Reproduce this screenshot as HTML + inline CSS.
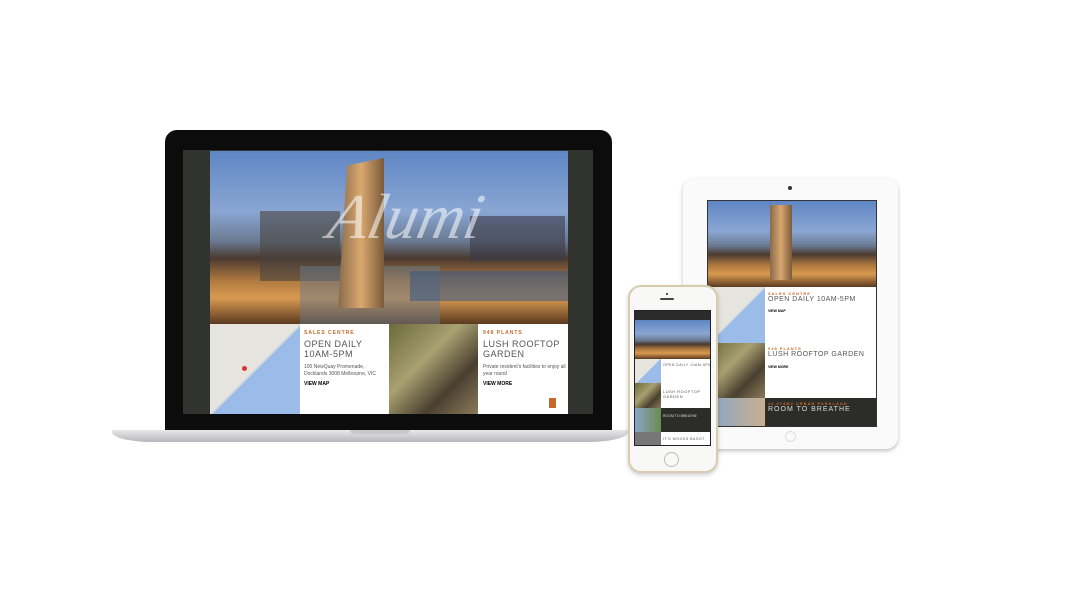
<!DOCTYPE html>
<html><head><meta charset="utf-8"><style>
*{margin:0;padding:0;box-sizing:border-box}
body{width:1065px;height:600px;background:#fff;position:relative;overflow:hidden;font-family:"Liberation Sans",sans-serif}
.a{position:absolute;white-space:nowrap}
.photo{background:linear-gradient(180deg,#5f86c4 0%,#8aa6d3 35%,#6a7a92 52%,#4a3a30 62%,#b07a40 75%,#d89a50 85%,#5b3a20 100%)}
.tower{background:linear-gradient(90deg,#8a6a4a,#d9a870,#7a5a3a)}
.map{background:linear-gradient(135deg,#e6e4de 0%,#e6e4de 50%,#9bbbe8 52%,#9bbbe8 100%)}
.plant{background:linear-gradient(135deg,#6b6a3a,#a8a070 40%,#4a4030 70%,#8a7a5a)}
.or{color:#c8692a;font-weight:bold;letter-spacing:1px}
.ttl{color:#555;letter-spacing:.5px}
</style></head><body>
<!-- laptop -->
<div class="a" style="left:165px;top:130px;width:447px;height:302px;background:#0c0c0c;border-radius:12px 12px 0 0"></div>
<div class="a" style="left:183px;top:150px;width:410px;height:264px;background:#30332e"></div>
<div class="a photo" style="left:210px;top:151px;width:358px;height:173px;overflow:hidden">
<div class="a" style="left:50px;top:60px;width:80px;height:70px;background:#4a4440;opacity:.6"></div>
<div class="a" style="left:260px;top:65px;width:95px;height:45px;background:#3a3a48;opacity:.6"></div>
<div class="a" style="left:90px;top:115px;width:140px;height:58px;background:#6a7a8a;opacity:.5"></div>
<div class="a" style="left:200px;top:120px;width:158px;height:30px;background:#3c5a84;opacity:.6"></div>
</div>
<div class="a tower" style="left:338px;top:158px;width:46px;height:150px;clip-path:polygon(20% 5%,100% 0,100% 100%,0 100%)"></div>
<div class="a" style="left:330px;top:180px;color:#fff;font-family:'Liberation Serif',serif;font-style:italic;font-size:64px;opacity:.55;transform:skewX(-12deg)">Alumi</div>
<div class="a" style="left:210px;top:324px;width:358px;height:90px;background:#fff"></div>
<div class="a map" style="left:210px;top:324px;width:90px;height:90px"></div>
<div class="a" style="left:242px;top:366px;width:5px;height:5px;border-radius:50%;background:#d33"></div>
<div class="a" style="left:304px;top:330px;font-size:5px"><span class="or">SALES CENTRE</span></div>
<div class="a ttl" style="left:304px;top:339px;font-size:9px;line-height:10px">OPEN DAILY<br>10AM-5PM</div>
<div class="a" style="left:304px;top:364px;font-size:5px;color:#555;line-height:7px">100 NewQuay Promenade,<br>Docklands 3008 Melbourne, VIC</div>
<div class="a" style="left:304px;top:381px;font-size:5px;font-weight:bold">VIEW MAP</div>
<div class="a plant" style="left:389px;top:324px;width:89px;height:90px"></div>
<div class="a" style="left:483px;top:330px;font-size:5px"><span class="or">948 PLANTS</span></div>
<div class="a ttl" style="left:483px;top:339px;font-size:9px;line-height:10px">LUSH ROOFTOP<br>GARDEN</div>
<div class="a" style="left:483px;top:364px;font-size:5px;color:#555;line-height:7px">Private resident's facilities to enjoy all<br>year round</div>
<div class="a" style="left:483px;top:381px;font-size:5px;font-weight:bold">VIEW MORE</div>
<div class="a" style="left:549px;top:398px;width:7px;height:10px;background:#c8692a"></div>
<div class="a" style="left:112px;top:430px;width:516px;height:12px;background:linear-gradient(180deg,#e8e8ea,#b8b8bc);border-radius:0 0 40px 40px/0 0 10px 10px"></div>
<div class="a" style="left:350px;top:430px;width:60px;height:4px;background:#c8c8cc;border-radius:0 0 4px 4px"></div>
<!-- ipad -->
<div class="a" style="left:683px;top:178px;width:215px;height:271px;background:#fafafa;border-radius:12px;box-shadow:0 2px 4px rgba(0,0,0,.25)"></div>
<div class="a" style="left:788px;top:186px;width:4px;height:4px;border-radius:50%;background:#333"></div>
<div class="a" style="left:785px;top:431px;width:11px;height:11px;border-radius:50%;border:1px solid #ddd"></div>
<div class="a" style="left:707px;top:200px;width:170px;height:227px;background:#fff;border:1px solid #333"></div>
<div class="a photo" style="left:708px;top:201px;width:168px;height:86px"></div>
<div class="a tower" style="left:770px;top:205px;width:22px;height:75px"></div>
<div class="a map" style="left:708px;top:287px;width:57px;height:56px"></div>
<div class="a" style="left:768px;top:291px;font-size:4px"><span class="or">SALES CENTRE</span></div>
<div class="a ttl" style="left:768px;top:296px;font-size:7px">OPEN DAILY 10AM-5PM</div>
<div class="a" style="left:768px;top:309px;font-size:3.5px;font-weight:bold">VIEW MAP</div>
<div class="a plant" style="left:708px;top:343px;width:57px;height:55px"></div>
<div class="a" style="left:768px;top:346px;font-size:4px"><span class="or">948 PLANTS</span></div>
<div class="a ttl" style="left:768px;top:351px;font-size:7px">LUSH ROOFTOP GARDEN</div>
<div class="a" style="left:768px;top:365px;font-size:3.5px;font-weight:bold">VIEW MORE</div>
<div class="a" style="left:708px;top:398px;width:168px;height:28px;background:#2c2d29"></div>
<div class="a" style="left:708px;top:398px;width:57px;height:28px;background:linear-gradient(90deg,#8aa6c8,#c8b090)"></div>
<div class="a" style="left:768px;top:401px;font-size:4px"><span class="or">16,974M2 URBAN PARKLAND</span></div>
<div class="a" style="left:768px;top:406px;font-size:7px;color:#ddd;letter-spacing:1px">ROOM TO BREATHE</div>
<!-- iphone -->
<div class="a" style="left:628px;top:285px;width:90px;height:188px;background:#f8f8f6;border-radius:13px;border:2px solid #d8ccb0;box-shadow:0 2px 4px rgba(0,0,0,.2)"></div>
<div class="a" style="left:666px;top:293px;width:2px;height:2px;border-radius:50%;background:#222"></div>
<div class="a" style="left:660px;top:298px;width:14px;height:2px;background:#444;border-radius:1px"></div>
<div class="a" style="left:664px;top:452px;width:15px;height:15px;border-radius:50%;border:1px solid #bbb"></div>
<div class="a" style="left:634px;top:310px;width:77px;height:136px;background:#fff;border:1px solid #222;overflow:hidden">
<div class="a" style="left:0;top:0;width:75px;height:9px;background:#2b2b2b"></div>
<div class="a photo" style="left:0;top:9px;width:75px;height:39px"></div>
<div class="a map" style="left:0;top:48px;width:26px;height:24px"></div>
<div class="a ttl" style="left:28px;top:52px;font-size:3.5px">OPEN DAILY 10AM-5PM</div>
<div class="a plant" style="left:0;top:72px;width:26px;height:25px"></div>
<div class="a ttl" style="left:28px;top:78px;font-size:4px">LUSH ROOFTOP<br>GARDEN</div>
<div class="a" style="left:0;top:97px;width:75px;height:24px;background:#2c2d29"></div>
<div class="a" style="left:0;top:97px;width:26px;height:24px;background:linear-gradient(90deg,#8aa6c8,#6a8a50)"></div>
<div class="a" style="left:28px;top:103px;font-size:3.5px;color:#ddd">ROOM TO BREATHE</div>
<div class="a" style="left:0;top:121px;width:26px;height:14px;background:#777"></div>
<div class="a ttl" style="left:28px;top:126px;font-size:3.5px">IT'S WOODS BAGOT</div>
</div>
</body></html>
